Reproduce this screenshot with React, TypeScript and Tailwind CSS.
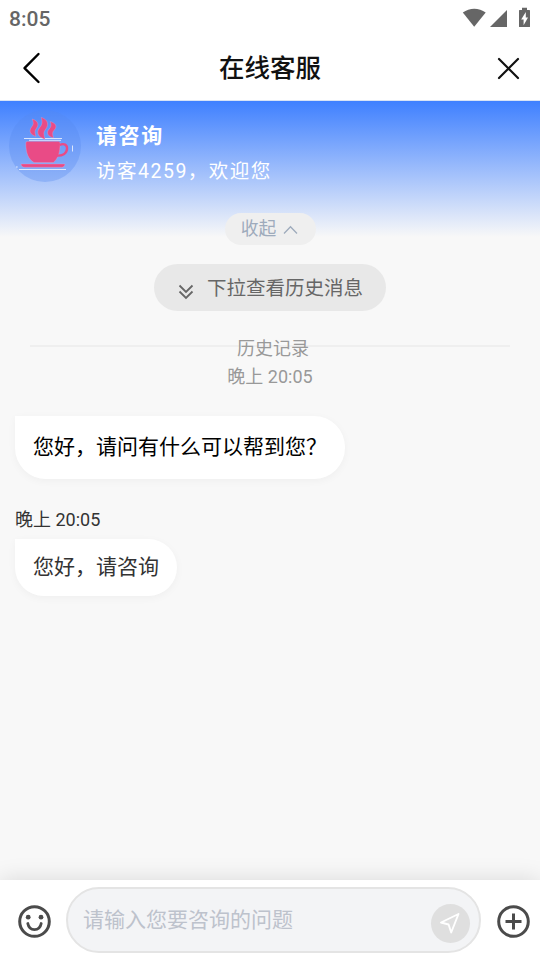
import { useState } from "react";

const StatusBar = () => (
    <div className="flex h-9 items-center justify-between pl-[9px] pr-[10px] text-[#666666]">
        <span className="pt-[2px] text-[21px] font-medium leading-6">8:05</span>
        <svg width="68" height="22" viewBox="0 0 68 22" fill="currentColor">
            <path d="M0.8 5.6C7.5 0.4 17 0.4 23.7 5.6L12.2 19.8Z" />
            <path d="M45 3V20H28Z" />
            <path d="M60 0.8h5v2.3h2.4q.6 0 .6.6v15.7q0 .6-.6.6h-9.8q-.6 0-.6-.6V3.700q0-.6.6-.6H60z" />
            <path d="M63.800 5L59.200 12.600H61.600V18.200L66 10.400H63.800Z" fill="#fff" />
        </svg>
    </div>
);

const CupAvatar = () => (
    <svg width="72" height="72" viewBox="0 0 72 72" fill="none">
        <circle cx="36" cy="36" r="36" fill="#5588ef" fillOpacity="0.33" />
        <path d="M15 28.500H53M20 30.300H52M10 59.500H57M63.500 35.500v6M7 57h1.700" stroke="#fff" strokeOpacity="0.75" />
        <g fill="#e94b86" stroke="#f0a9cb" strokeWidth="0.300">
            <path d="M16.800 33q0-1.600 1.600-1.600H49.500q1.600 0 1.600 1.600c0 9.500-1.800 15.500-6.800 19.500H25C19 49 16.800 42.500 16.800 33z" />
            <path d="M12 54h44c-.4 2.200-1.600 3.200-3.500 3.200H16c-2.400 0-3.600-1-4-3.200z" />
            <path d="M23.200 9c4 1.300 6 3.300 5.600 6.300-.4 2.600-2.800 4-2.800 6.500 0 1.700.4 3 1 4.600-4-1.300-6.200-3.300-5.900-6.200.3-2.700 3.100-4.200 3.200-6.800 0-1.500-.5-2.900-1.100-4.400z" />
            <path d="M32.200 7.300c4.800 1.800 6.800 4.400 6.300 8-.5 3.300-3.500 4.900-3.600 7.800 0 2.100.4 4 1.100 6.200-5-1.700-7.600-4.200-7.200-7.800.4-3.400 4-5.300 4.200-8.500.1-2-.2-3.700-.8-5.700z" />
            <path d="M41.200 11.500c4 1.300 6 3 5.700 5.600-.3 2.500-3.200 3.700-3.300 6.100 0 1.700.3 3.100.9 4.800-4.200-1.300-6.300-3.200-6-5.900.3-2.600 3.300-3.900 3.500-6.400.1-1.600-.2-2.800-.8-4.200z" />
        </g>
        <path d="M50.500 35c4.500-2 8-.5 7.500 4-.5 4.500-4.600 7-10.500 6.500" stroke="#e94b86" strokeWidth="2.400" />
    </svg>
);

const SmileIcon = () => (
    <svg width="33" height="33" viewBox="0 0 33 33" fill="none" stroke="#4b4b4b">
        <circle cx="16.500" cy="16.500" r="14.800" strokeWidth="3" />
        <circle cx="10.200" cy="12.200" r="2.400" fill="#4b4b4b" stroke="none" />
        <circle cx="23" cy="12.200" r="2.400" fill="#4b4b4b" stroke="none" />
        <path d="M9.800 18.500c.8 4 3.300 6.100 6.700 6.100s5.900-2.100 6.700-6.100" strokeWidth="2.800" strokeLinecap="round" />
    </svg>
);

const PlusIcon = () => (
    <svg width="33" height="33" viewBox="0 0 33 33" fill="none" stroke="#4b4b4b" strokeWidth="3">
        <circle cx="16.500" cy="16.500" r="14.800" />
        <path d="M16.500 8.500v16M8.500 16.500h16" />
    </svg>
);

const App = () => {
    const [collapsed, setCollapsed] = useState(false);
    const [message, setMessage] = useState("");

    return (
        <div className="flex h-[961px] w-[540px] flex-col overflow-hidden bg-[#f8f8f8] font-['Roboto','Noto_Sans_CJK_SC',sans-serif]">
            <header className="h-[101px] shrink-0 border-b border-[#d9e3f5] bg-white">
                <StatusBar />
                <div className="grid h-16 grid-cols-[60px_1fr_60px] items-center">
                    <button aria-label="返回" className="pl-[22px]">
                        <svg width="20" height="32" viewBox="0 0 20 32" fill="none" stroke="#000" strokeWidth="2.400" strokeLinecap="round" strokeLinejoin="round">
                            <path d="M16.500 2L2.500 16.200L16.500 30" />
                        </svg>
                    </button>
                    <h1 className="text-center text-[25.5px] font-medium leading-9 text-[#111]">在线客服</h1>
                    <button aria-label="关闭" className="flex justify-end pr-5">
                        <svg width="23" height="23" viewBox="0 0 23 23" fill="none" stroke="#111" strokeWidth="2.200" strokeLinecap="round">
                            <path d="M2 2L21 21M21 2L2 21" />
                        </svg>
                    </button>
                </div>
            </header>

            <main className="flex flex-1 flex-col">
                <section className="flex h-[136px] flex-col bg-linear-to-b/srgb from-[#3f80ff] to-[#f8f8f8]">
                    {!collapsed && (
                        <div className="flex h-[81px] gap-[15px] pl-[9px] pt-[9px]">
                            <CupAvatar />
                            <div className="pt-[10px] text-white">
                                <h2 className="text-[21px] font-bold leading-8 tracking-[1.6px]">请咨询</h2>
                                <p className="pt-[4px] text-[19.5px] leading-8 tracking-[1.5px]">访客4259，欢迎您</p>
                            </div>
                        </div>
                    )}
                    <button
                        className="mx-auto mt-[31px] flex h-8 w-[91px] shrink-0 items-center justify-center gap-[7px] rounded-full bg-[#efefef] pr-[1px] pt-[1px] text-[17.8px] text-[#9eabbc]"
                        onClick={() => setCollapsed(!collapsed)}
                    >
                        收起
                        <svg width="15" height="10" viewBox="0 0 15 10" fill="none" stroke="currentColor" strokeWidth="1.300">
                            <path d="M1 8.500L7.500 1.800L14 8.500" />
                        </svg>
                    </button>
                </section>

                <button className="mx-auto mt-[27px] flex h-[47px] w-[232px] items-center rounded-full bg-[#e8e8e8] pl-6 text-[19.5px] text-[#666]">
                    <svg className="mr-[13px] mt-[8px]" width="16" height="16" viewBox="0 0 16 16" fill="none" stroke="currentColor" strokeWidth="1.800">
                        <path d="M1.500 1.500L8 8L14.500 1.500M1.500 7.500L8 14L14.500 7.500" />
                    </svg>
                    <span className="pt-[3px]">下拉查看历史消息</span>
                </button>

                <div className="mt-[21px] grid h-[29px] items-center px-[30px] text-[#999]">
                    <hr className="col-start-1 row-start-1 mb-[2px] border-t-2 border-[#efefef]" />
                    <span className="col-start-1 row-start-1 pl-[6px] pt-[5px] text-center text-[18px] leading-6">历史记录</span>
                </div>
                <time className="mt-[2px] text-center text-[18px] leading-7 text-[#999]">晚上 20:05</time>

                <div className="ml-[15px] mt-[25px] flex h-[63px] w-[330px] items-center rounded-[31px] rounded-tl-none bg-white pl-[18px] text-[21px] text-black shadow-[0_2px_8px_rgba(0,0,0,0.04)]">
                    您好，请问有什么可以帮到您？
                </div>
                <time className="ml-[15px] mt-[27px] text-[18px] leading-7 text-[#333]">晚上 20:05</time>
                <div className="ml-[15px] mt-[5px] flex h-[57px] w-[162px] items-center rounded-[29px] rounded-tl-none bg-white pl-[18px] text-[21px] text-[#333] shadow-[0_2px_8px_rgba(0,0,0,0.04)]">
                    您好，请咨询
                </div>
            </main>

            <footer className="flex h-[81px] shrink-0 items-center bg-white pl-[18px] pr-[10.5px] shadow-[0_0_22px_rgba(0,0,0,0.13)]">
                <button aria-label="表情" className="pt-[2px]"><SmileIcon /></button>
                <div className="mb-px ml-[15px] flex h-[66px] w-[415px] items-center rounded-full border-2 border-[#e4e4e4] bg-[#f3f4f6] pl-[15px] pr-[9.5px]">
                    <input
                        className="min-w-0 flex-1 pt-[1px] text-[21px] outline-none placeholder:text-[#bdc2cc]"
                        placeholder="请输入您要咨询的问题"
                        value={message}
                        onChange={(e) => setMessage(e.target.value)}
                    />
                    <button aria-label="发送" className="mt-[6px] flex size-[39px] items-center justify-center rounded-full bg-[#dfdfdf]">
                        <svg width="22" height="22" viewBox="0 0 22 22" fill="none" stroke="#fff" strokeWidth="1.900" strokeLinejoin="round">
                            <path d="M19.500 2L2 10.500L9.600 12.500L12.200 20.500Z" />
                        </svg>
                    </button>
                </div>
                <button aria-label="更多" className="ml-auto pt-[2px]"><PlusIcon /></button>
            </footer>
        </div>
    );
};

export default App;
